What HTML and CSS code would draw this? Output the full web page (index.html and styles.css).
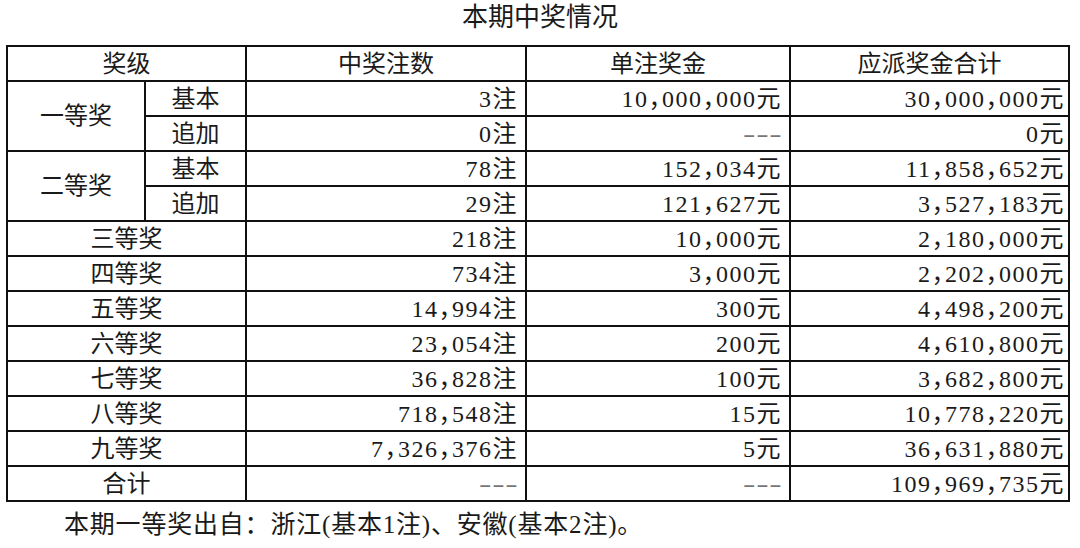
FILE: index.html
```html
<!DOCTYPE html>
<html lang="zh-CN">
<head>
<meta charset="utf-8">
<title>本期中奖情况</title>
<link rel="stylesheet" href="styles.css">
</head>
<body>
<div class="page">
  <h1 class="title">本期中奖情况</h1>
  <table class="prize">
    <colgroup>
      <col class="c1"><col class="c2"><col class="c3"><col class="c4"><col class="c5">
    </colgroup>
    <thead>
      <tr>
        <th colspan="2">奖级</th>
        <th>中奖注数</th>
        <th>单注奖金</th>
        <th>应派奖金合计</th>
      </tr>
    </thead>
    <tbody>
      <tr>
        <td class="lbl" rowspan="2">一等奖</td>
        <td class="lbl">基本</td>
        <td class="num">3注</td>
        <td class="num">10，000，000元</td>
        <td class="num last">30，000，000元</td>
      </tr>
      <tr>
        <td class="lbl">追加</td>
        <td class="num">0注</td>
        <td class="num"><span class="dash">---</span></td>
        <td class="num last">0元</td>
      </tr>
      <tr>
        <td class="lbl" rowspan="2">二等奖</td>
        <td class="lbl">基本</td>
        <td class="num">78注</td>
        <td class="num">152，034元</td>
        <td class="num last">11，858，652元</td>
      </tr>
      <tr>
        <td class="lbl">追加</td>
        <td class="num">29注</td>
        <td class="num">121，627元</td>
        <td class="num last">3，527，183元</td>
      </tr>
      <tr>
        <td class="lbl" colspan="2">三等奖</td>
        <td class="num">218注</td>
        <td class="num">10，000元</td>
        <td class="num last">2，180，000元</td>
      </tr>
      <tr>
        <td class="lbl" colspan="2">四等奖</td>
        <td class="num">734注</td>
        <td class="num">3，000元</td>
        <td class="num last">2，202，000元</td>
      </tr>
      <tr>
        <td class="lbl" colspan="2">五等奖</td>
        <td class="num">14，994注</td>
        <td class="num">300元</td>
        <td class="num last">4，498，200元</td>
      </tr>
      <tr>
        <td class="lbl" colspan="2">六等奖</td>
        <td class="num">23，054注</td>
        <td class="num">200元</td>
        <td class="num last">4，610，800元</td>
      </tr>
      <tr>
        <td class="lbl" colspan="2">七等奖</td>
        <td class="num">36，828注</td>
        <td class="num">100元</td>
        <td class="num last">3，682，800元</td>
      </tr>
      <tr>
        <td class="lbl" colspan="2">八等奖</td>
        <td class="num">718，548注</td>
        <td class="num">15元</td>
        <td class="num last">10，778，220元</td>
      </tr>
      <tr>
        <td class="lbl" colspan="2">九等奖</td>
        <td class="num">7，326，376注</td>
        <td class="num">5元</td>
        <td class="num last">36，631，880元</td>
      </tr>
      <tr>
        <td class="lbl" colspan="2">合计</td>
        <td class="num"><span class="dash">---</span></td>
        <td class="num"><span class="dash">---</span></td>
        <td class="num last">109，969，735元</td>
      </tr>
    </tbody>
  </table>
  <p class="note">本期一等奖出自：浙江(基本1注)、安徽(基本2注)。</p>
</div>
</body>
</html>
```

FILE: styles.css
```css
html, body {
  margin: 0;
  padding: 0;
  background: #ffffff;
}

body {
  font-family: "Liberation Serif", "Noto Sans CJK SC", serif;
  color: #1a1a1a;
}

.page {
  width: 1080px;
  height: 548px;
  padding-left: 6px;
  box-sizing: border-box;
}

.title {
  margin: 0;
  height: 36px;
  line-height: 36px;
  font-size: 26px;
  font-weight: normal;
  text-align: center;
  padding-right: 6px;
  margin-bottom: 9px;
}

.prize {
  border-collapse: collapse;
  table-layout: fixed;
  width: 1062px;
  font-size: 24px;
}

.c1 { width: 138px; }
.c2 { width: 101px; }
.c3 { width: 280px; }
.c4 { width: 264px; }
.c5 { width: 279px; }

.prize th,
.prize td {
  border: 2px solid #111111;
  height: 35px;
  padding: 0;
  box-sizing: border-box;
  font-weight: normal;
  line-height: 30px;
  white-space: nowrap;
}

.prize th {
  text-align: center;
}

.lbl {
  text-align: center;
}

.num {
  text-align: right;
  padding-right: 7px !important;
  letter-spacing: 1.5px;
  font-feature-settings: "halt" 1;
}

.num.last {
  padding-right: 3px !important;
}

.dash {
  display: inline-block;
  color: #777777;
  letter-spacing: 0.5px;
  transform: scaleX(1.55);
  transform-origin: right center;
}

.note {
  margin: 8px 0 0 58px;
  font-size: 25px;
  line-height: 30px;
  letter-spacing: 0.8px;
  font-family: "Liberation Serif", "Noto Sans CJK SC", serif;
}
```
